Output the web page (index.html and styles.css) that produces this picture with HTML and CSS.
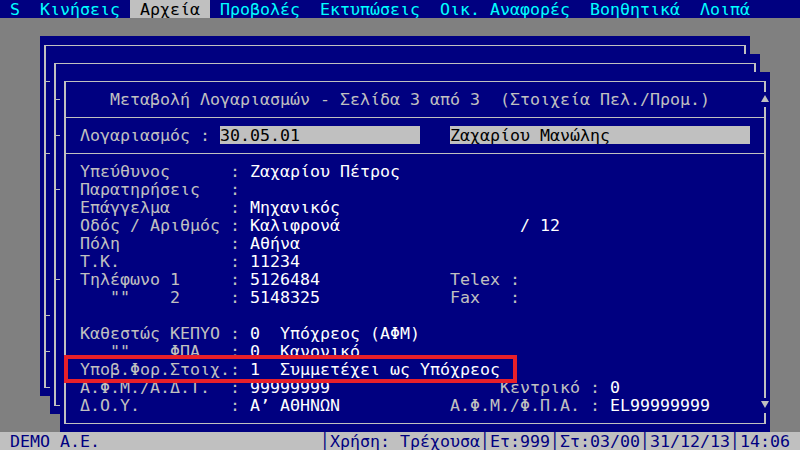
FILE: index.html
```html
<!DOCTYPE html>
<html lang="el">
<head>
<meta charset="utf-8">
<title>Μεταβολή Λογαριασμών</title>
<link rel="stylesheet" href="styles.css">
</head>
<body>
<div class="screen">
<div class="menubar"><span> S  Κινήσεις </span><span class="menu-active"> Αρχεία </span><span> Προβολές  Εκτυπώσεις  Οικ. Αναφορές  Βοηθητικά  Λοιπά</span></div>
<div class="desktop">
<div class="window w1">
<div class="frame">
<div class="row"></div>
<div class="sep"></div>
<div class="row"></div>
<div class="row"></div>
<div class="row"></div>
<div class="sep"></div>
<div class="row"></div>
<div class="row"></div>
<div class="row"></div>
<div class="row"></div>
<div class="row"></div>
<div class="row"></div>
<div class="row"></div>
<div class="row"></div>
<div class="sep"></div>
<div class="row"></div>
<div class="sep"></div>
<div class="row"></div>
</div>
</div>
<div class="window w2">
<div class="frame">
<div class="row"></div>
<div class="sep"></div>
<div class="row"></div>
<div class="sep"></div>
<div class="row"></div>
<div class="row"></div>
<div class="sep"></div>
<div class="row"></div>
<div class="row"></div>
<div class="row"></div>
<div class="row"></div>
<div class="sep"></div>
<div class="row"></div>
<div class="row"></div>
<div class="row"></div>
<div class="row"></div>
<div class="row"></div>
<div class="row"></div>
</div>
</div>
<div class="window w3">
<div class="frame">
<div class="row">   Μεταβολή Λογαριασμών - Σελίδα 3 από 3  (Στοιχεία Πελ./Προμ.)</div>
<div class="sep"></div>
<div class="row">Λογαριασμός : <span class="field f1">30.05.01</span>   <span class="field f2">Ζαχαρίου Μανώλης</span></div>
<div class="sep"></div>
<div class="row">Υπεύθυνος      : <span class="v">Ζαχαρίου Πέτρος</span></div>
<div class="row">Παρατηρήσεις   : </div>
<div class="row">Επάγγελμα      : <span class="v">Μηχανικός</span></div>
<div class="row">Οδός / Αριθμός : <span class="v">Καλιφρονά                  / 12</span></div>
<div class="row">Πόλη           : <span class="v">Αθήνα</span></div>
<div class="row">Τ.Κ.           : <span class="v">11234</span></div>
<div class="row">Τηλέφωνο 1     : <span class="v">5126484</span>             Telex :</div>
<div class="row">   ""    2     : <span class="v">5148325</span>             Fax   :</div>
<div class="row"></div>
<div class="row">Καθεστώς ΚΕΠΥΟ : <span class="v">0  Υπόχρεος (ΑΦΜ)</span></div>
<div class="row">   ""    ΦΠΑ   : <span class="v">0  Κανονικό</span></div>
<div class="row">Υποβ.Φορ.Στοιχ.: <span class="v">1  Συμμετέχει ως Υπόχρεος</span></div>
<div class="row">Α.Φ.Μ./Α.Δ.Τ.  : <span class="v">99999999</span>                 Κεντρικό : <span class="v">0</span></div>
<div class="row">Δ.Ο.Υ.         : <span class="v">Α’ ΑΘΗΝΩΝ</span>           Α.Φ.Μ./Φ.Π.Α. : <span class="v">EL99999999</span></div>
</div>
<span class="arrow arrow-up"></span>
<span class="arrow arrow-down"></span>
</div>
<div class="highlight"></div>
</div>
<div class="statusbar"> DEMO Α.Ε.                      │Χρήση: Τρέχουσα│Ετ:999│Στ:03/00│31/12/13│14:06</div>
</div>
</body>
</html>
```
FILE: styles.css
```css
* { box-sizing: border-box; }
html, body { margin: 0; padding: 0; background: #ffffff; }
body {
  font-family: "DejaVu Sans Mono", "Liberation Mono", monospace;
  font-size: 16.61px;
  line-height: 20.5px;
}
.screen {
  width: 800px;
  height: 450px;
  display: flex;
  flex-direction: column;
  background: #808080;
}
.menubar {
  height: 18px;
  background: #000080;
  color: #00ffff;
  white-space: pre;
  overflow: hidden;
}
.menu-active {
  display: inline-block;
  vertical-align: top;
  height: 18px;
  background: #c0c0c0;
  color: #000000;
}
.desktop {
  flex: 1;
  position: relative;
  background: #808080;
}
.statusbar {
  height: 18px;
  background: #c0c0c0;
  color: #000080;
  white-space: pre;
  overflow: hidden;
}
.window {
  position: absolute;
  width: 710px;
  height: 360px;
  background: #000080;
}
.w1 { left: 40px; top: 18px; }
.w2 { left: 50px; top: 36px; }
.w3 { left: 60px; top: 54px; }
.frame {
  height: 343px;
  margin: 9px 4px 8px;
  border-style: solid;
  border-color: #c0c0c0;
  border-width: 1px 2px;
  padding: 8px 0 9px;
}
.row {
  height: 18px;
  padding-left: 14px;
  white-space: pre;
  color: #c0c0c0;
}
.sep {
  height: 1px;
  margin: 9px -2px 8px;
  background: #c0c0c0;
}
.v { color: #ffffff; }
.field {
  display: inline-block;
  vertical-align: top;
  height: 18px;
  background: #c0c0c0;
  color: #000000;
}
.f1 { width: 200px; }
.f2 { width: 300px; }
.arrow {
  position: absolute;
  left: 700px;
  width: 10px;
  height: 15px;
  background: #000080;
}
.arrow-up { top: 20px; }
.arrow-down { top: 326px; }
.arrow::before {
  content: "";
  position: absolute;
  left: 1px;
  top: 3px;
  border-left: 4px solid transparent;
  border-right: 4px solid transparent;
}
.arrow-up::before { border-bottom: 7px solid #c0c0c0; }
.arrow-down::before { border-top: 7px solid #c0c0c0; }
.highlight {
  position: absolute;
  left: 64px;
  top: 337px;
  width: 453px;
  height: 28px;
  border: 4px solid #e8202a;
}
```
